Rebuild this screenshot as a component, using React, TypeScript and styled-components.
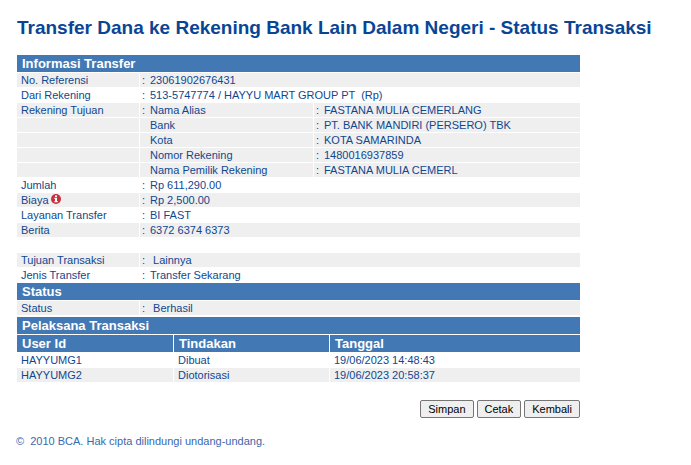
import React from "react";
import styled, { createGlobalStyle } from "styled-components";

const GlobalStyle = createGlobalStyle`
  body {
    margin: 0;
    background: #fff;
    color: #10478f;
    font-family: "Liberation Sans", Arial, Helvetica, sans-serif;
    font-size: 11px;
    line-height: 14px;
  }
`;

const Page = styled.main`
  padding: 16px;
`;

const Title = styled.h1`
  margin: 0 0 15px;
  padding-left: 1px;
  color: #0a4595;
  font-size: 19px;
  line-height: 23px;
`;

const Content = styled.div`
  max-width: 565px;
`;

const Table = styled.table`
  width: 100%;
  table-layout: fixed;
  border-collapse: separate;
  border-spacing: 1px;
`;

const Col = styled.col<{ $width?: string }>`
  width: ${(p) => p.$width ?? "auto"};
`;

const Heading = styled.th`
  height: 17px;
  padding: 0 5px;
  background: #4279b5;
  color: #fff;
  font-size: 13px;
  line-height: 17px;
  text-align: left;
`;

const Row = styled.tr<{ $shaded?: boolean }>`
  background: ${(p) => (p.$shaded ? "#efefef" : "#fff")};
`;

const Label = styled.th`
  height: 14px;
  padding: 0 4px;
  font-weight: 400;
  text-align: left;
  white-space: nowrap;
`;

const Cell = styled.td`
  height: 14px;
  padding: 0 4px;
`;

const Value = styled.td`
  height: 14px;
  padding: 0 2px;
  white-space: pre;
`;

const Colon = styled.span`
  display: inline-block;
  width: 8px;
`;

const InfoIcon = styled.svg`
  width: 10px;
  height: 10px;
  margin-left: 2px;
  vertical-align: baseline;
`;

const Actions = styled.div`
  display: flex;
  justify-content: flex-end;
  gap: 3px;
  margin-top: 17px;
  padding-right: 1px;
`;

const Button = styled.button`
  height: 18px;
  padding: 0 7px;
  border: 1px solid #767676;
  border-radius: 2px;
  background: #efefef;
  color: #000;
  font: inherit;
`;

const Footer = styled.footer`
  margin-top: 16px;
  color: #3a68ae;
  white-space: pre;
`;

const Info = () => (
  <InfoIcon viewBox="0 0 10 10" role="img" aria-label="Info">
    <circle cx="5" cy="5" r="5" fill="#cb2f3e" />
    <path d="M4 1.4h2v1.5H4zM3.4 3.8H6v3.3h.7v1.2H3.4V7.1H4V5h-.6z" fill="#fff" />
  </InfoIcon>
);

type Detail = { label: string; value: string; shaded?: boolean; info?: boolean };

const summary: Detail[] = [
  { label: "No. Referensi", value: "23061902676431", shaded: true },
  { label: "Dari Rekening", value: "513-5747774 / HAYYU MART GROUP PT  (Rp)" },
];

const destination = [
  ["Nama Alias", "FASTANA MULIA CEMERLANG"],
  ["Bank", "PT. BANK MANDIRI (PERSERO) TBK"],
  ["Kota", "KOTA SAMARINDA"],
  ["Nomor Rekening", "1480016937859"],
  ["Nama Pemilik Rekening", "FASTANA MULIA CEMERL"],
];

const payment: Detail[] = [
  { label: "Jumlah", value: "Rp 611,290.00" },
  { label: "Biaya", value: "Rp 2,500.00", shaded: true, info: true },
  { label: "Layanan Transfer", value: "BI FAST" },
  { label: "Berita", value: "6372 6374 6373", shaded: true },
];

const purpose: Detail[] = [
  { label: "Tujuan Transaksi", value: " Lainnya", shaded: true },
  { label: "Jenis Transfer", value: "Transfer Sekarang" },
];

const users = [
  ["HAYYUMG1", "Dibuat", "19/06/2023 14:48:43"],
  ["HAYYUMG2", "Diotorisasi", "19/06/2023 20:58:37"],
];

const DetailRow = ({ label, value, shaded, info }: Detail) => (
  <Row $shaded={shaded}>
    <Label scope="row">
      {label}
      {info && <Info />}
    </Label>
    <Value colSpan={2}>
      <Colon>:</Colon>
      {value}
    </Value>
  </Row>
);

export default function App() {
  return (
    <>
      <GlobalStyle />
      <Page>
        <Title>Transfer Dana ke Rekening Bank Lain Dalam Negeri - Status Transaksi</Title>
        <Content>
          <Table>
            <colgroup>
              <Col $width="122px" />
              <Col $width="173px" />
              <Col />
            </colgroup>
            <tbody>
              <tr>
                <Heading colSpan={3}>Informasi Transfer</Heading>
              </tr>
              {summary.map((d) => (
                <DetailRow key={d.label} {...d} />
              ))}
              {destination.map(([name, value], i) => (
                <Row key={name} $shaded>
                  <Label scope="row">{i === 0 ? "Rekening Tujuan" : ""}</Label>
                  <Value>
                    <Colon>{i === 0 ? ":" : ""}</Colon>
                    {name}
                  </Value>
                  <Value>
                    <Colon>:</Colon>
                    {value}
                  </Value>
                </Row>
              ))}
              {payment.map((d) => (
                <DetailRow key={d.label} {...d} />
              ))}
              <Row>
                <Cell colSpan={3} />
              </Row>
              {purpose.map((d) => (
                <DetailRow key={d.label} {...d} />
              ))}
              <tr>
                <Heading colSpan={3}>Status</Heading>
              </tr>
              <DetailRow label="Status" value=" Berhasil" shaded />
            </tbody>
          </Table>
          <Table>
            <colgroup>
              <Col $width="156px" />
              <Col $width="155px" />
              <Col />
            </colgroup>
            <thead>
              <tr>
                <Heading colSpan={3}>Pelaksana Transaksi</Heading>
              </tr>
              <tr>
                <Heading scope="col">User Id</Heading>
                <Heading scope="col">Tindakan</Heading>
                <Heading scope="col">Tanggal</Heading>
              </tr>
            </thead>
            <tbody>
              {users.map(([id, action, date], i) => (
                <Row key={id} $shaded={i % 2 === 1}>
                  <Cell>{id}</Cell>
                  <Cell>{action}</Cell>
                  <Cell>{date}</Cell>
                </Row>
              ))}
            </tbody>
          </Table>
          <Actions>
            <Button type="button">Simpan</Button>
            <Button type="button">Cetak</Button>
            <Button type="button">Kembali</Button>
          </Actions>
        </Content>
        <Footer>©  2010 BCA. Hak cipta dilindungi undang-undang.</Footer>
      </Page>
    </>
  );
}
